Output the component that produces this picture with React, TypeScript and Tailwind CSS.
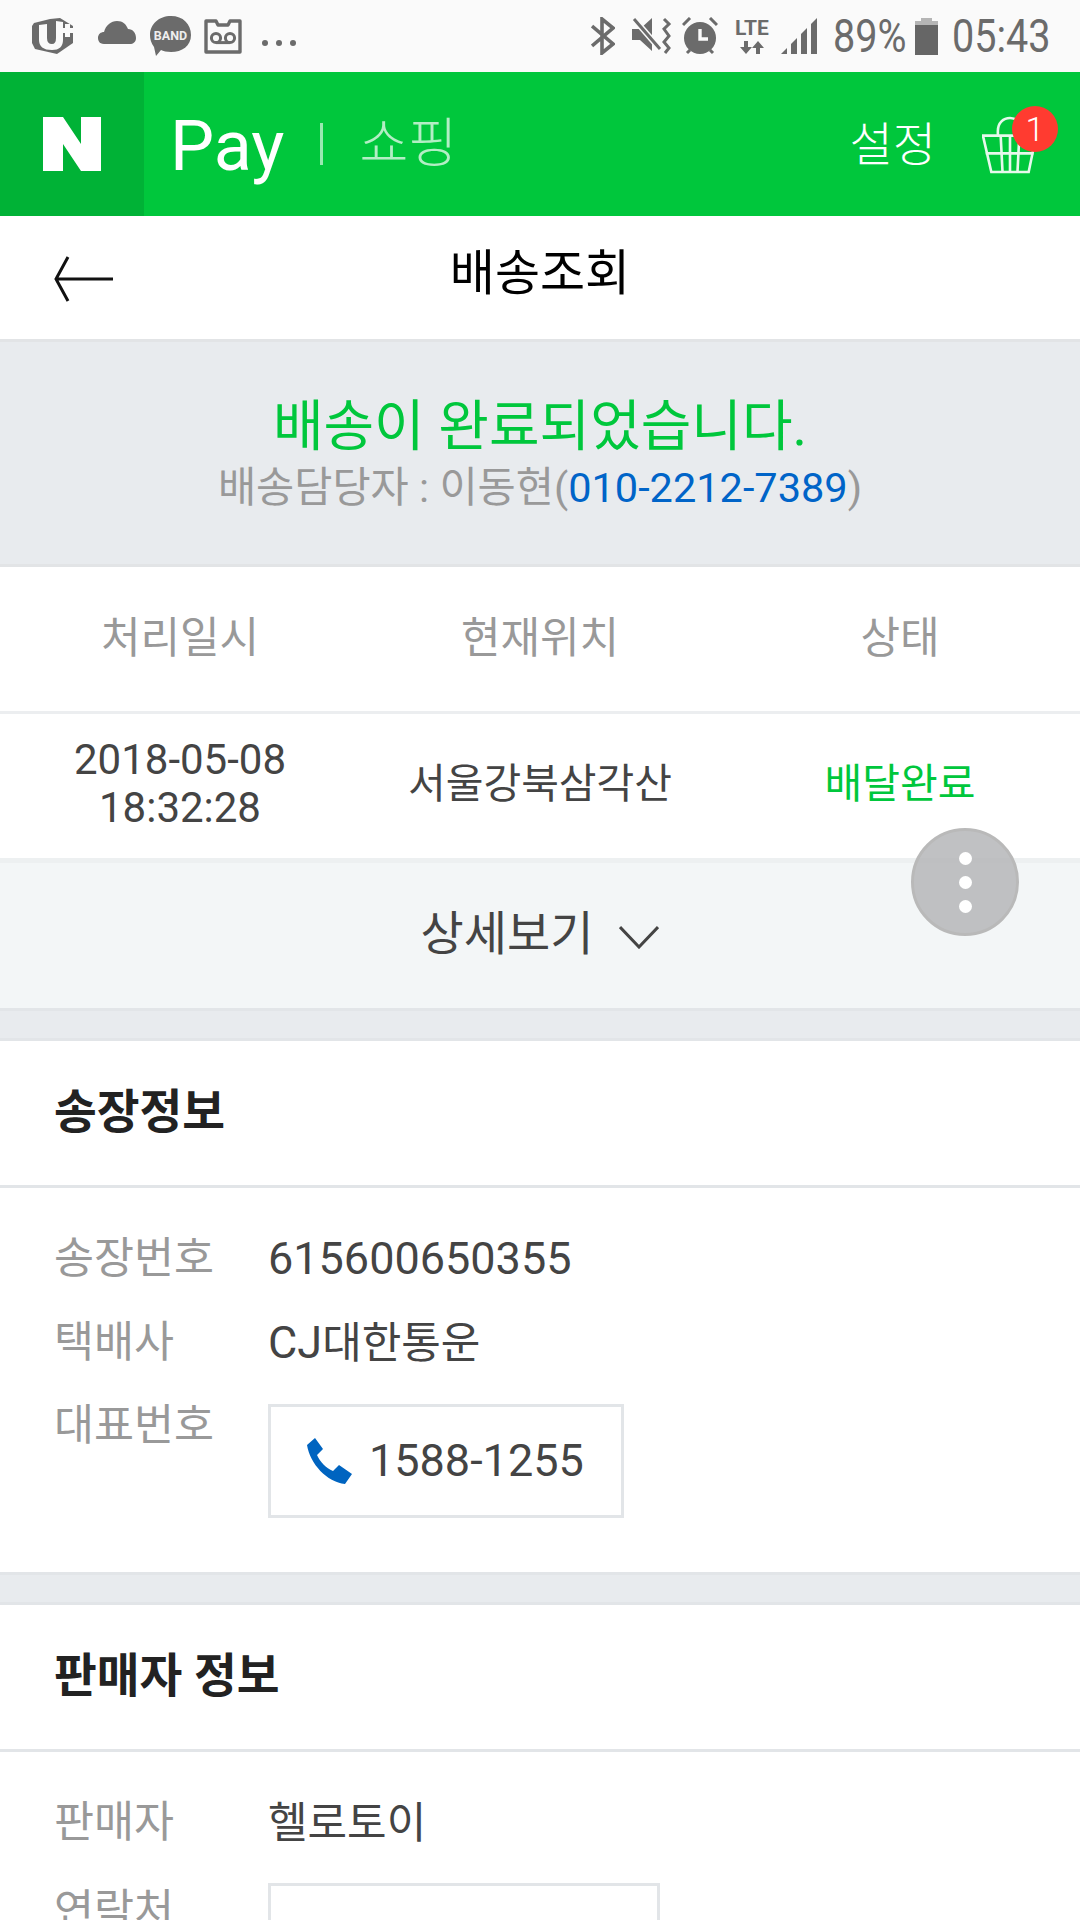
import React from "react";

const KR = "font-['Roboto','Noto_Sans_CJK_KR',sans-serif]";

// Status bar icons, drawn in a 36px box
function StatusLeft() {
  return (
    <div className="flex items-center">
      <svg width="42" height="38" viewBox="0 0 42 38" className="ml-[32px]" fill="#6b6b6b">
        <path d="M2 6 L18 2 L28 1 L41 9 L41 26 L25 37 L3 32 L0 26 L0 9 Z" />
        <path d="M7 8 L15 7 L15 21 Q15 27 20 27 Q24 27 24 21 L24 4 L31 5 L31 23 Q31 33 20 33 Q7 33 7 23 Z" fill="#fafafa" />
        <path d="M29 11 H33 V7 H38 V11 H42 V16 H38 V20 H33 V16 H29 Z" fill="#fafafa" />
      </svg>
      <svg width="38" height="24" viewBox="0 0 38 24" className="ml-[24px] mt-[-6px]" fill="#6b6b6b">
        <path d="M6 23 C1 23 0 19 0 17 C0 13 3 11 6 11 C8 4 13 0 19 0 C25 0 28 3 30 8 C35 8 38 12 38 17 C38 21 35 23 32 23 Z" />
      </svg>
      <svg width="42" height="42" viewBox="0 0 42 42" className="ml-[14px]">
        <path d="M21 1 C33 1 41 9 41 20 C41 31 32 37 21 37 C17 37 13 36 11 35 L6 41 L4 32 C1 28 0 24 0 20 C0 9 9 1 21 1 Z" fill="#6b6b6b" />
        <text x="20.5" y="24.5" textAnchor="middle" fontSize="12.5" fontWeight="700" fill="#eeeeee" fontFamily="Roboto, sans-serif">BAND</text>
      </svg>
      <svg width="38" height="35" viewBox="0 0 38 35" className="ml-[12px]" fill="none">
        <path d="M2 2 H12 L14 6 H24 L26 2 H36 V33 H2 Z" stroke="#6b6b6b" strokeWidth="3.4" strokeLinejoin="round" />
        <circle cx="12" cy="19" r="4.6" stroke="#6b6b6b" strokeWidth="3" />
        <circle cx="26" cy="19" r="4.6" stroke="#6b6b6b" strokeWidth="3" />
        <path d="M12 23.6 H26" stroke="#6b6b6b" strokeWidth="3" />
      </svg>
      <div className="ml-[20px] mt-[14px] flex gap-[8px]">
        <span className="size-[6px] rounded-full bg-[#6b6b6b]" />
        <span className="size-[6px] rounded-full bg-[#6b6b6b]" />
        <span className="size-[6px] rounded-full bg-[#6b6b6b]" />
      </div>
    </div>
  );
}

function StatusRight() {
  return (
    <div className="flex items-center pr-[31px]">
      <svg width="24" height="38" viewBox="0 0 24 38" fill="none" stroke="#6b6b6b" strokeWidth="3.6">
        <path d="M1 9 L22 27 L11 36 V2 L22 11 L1 29" />
      </svg>
      <svg width="40" height="38" viewBox="0 0 40 38" className="ml-[17px]" fill="#6b6b6b">
        <path d="M0 12 H8 L20 1 V34 L8 23 H0 Z" />
        <path d="M2 2 L28 32" stroke="#fafafa" strokeWidth="6" />
        <path d="M2 2 L28 32" stroke="#6b6b6b" strokeWidth="3" />
        <path d="M32 2 L37 7 L32 12 L37 19 L32 25 L37 31 L33 36" fill="none" stroke="#6b6b6b" strokeWidth="3" />
      </svg>
      <svg width="36" height="38" viewBox="0 0 36 38" className="ml-[10px]" fill="#6b6b6b">
        <circle cx="18" cy="21" r="16" />
        <path d="M1 8 L8 1 M35 8 L28 1 M5 36 L8 33 M31 36 L28 33" stroke="#6b6b6b" strokeWidth="3" />
        <path d="M18 12 V22 H26" fill="none" stroke="#fafafa" strokeWidth="3.4" />
      </svg>
      <div className="ml-[15px] flex w-[38px] flex-col items-center">
        <span className="font-['Roboto',sans-serif] text-[21px] font-bold leading-[20px] text-[#6b6b6b]">LTE</span>
        <svg width="24" height="14" viewBox="0 0 24 14" fill="#6b6b6b" className="mt-[3px]">
          <path d="M4 0 H8 V6 H12 L6 13 L0 6 H4 Z" />
          <path d="M16 13 H20 V7 H24 L18 0 L12 7 H16 Z" />
        </svg>
      </div>
      <svg width="36" height="38" viewBox="0 0 36 38" className="ml-[10px]" fill="#6b6b6b">
        <path d="M0 37 L6 31 V37 Z" />
        <path d="M10 37 V27 L16 21 V37 Z" />
        <path d="M20 37 V17 L26 11 V37 Z" />
        <path d="M30 37 V7 L36 1 V37 Z" />
      </svg>
      <span className="ml-[16px] w-[72px] origin-left scale-x-[0.86] whitespace-nowrap font-['Roboto',sans-serif] text-[46px] leading-[44px] text-[#6b6b6b]">89%</span>
      <div className="ml-[10px] flex w-[23px] flex-col items-center">
        <div className="h-[3px] w-[11px] bg-[#b5b5b5]" />
        <div className="h-[4px] w-[23px] bg-[#b5b5b5]" />
        <div className="h-[30px] w-[23px] bg-[#666666]" />
      </div>
      <span className="ml-[14px] w-[97px] origin-left scale-x-[0.86] whitespace-nowrap font-['Roboto',sans-serif] text-[46px] leading-[44px] text-[#6b6b6b]">05:43</span>
    </div>
  );
}

function Basket() {
  return (
    <svg width="56" height="58" viewBox="0 0 60 62" fill="none" stroke="#e6f9ec" strokeWidth="2.8">
      <path d="M1 21 H58 L50 60 H10 Z" />
      <path d="M17 21 V16 C17 7 23 2 30 2 C37 2 43 7 43 16 V21" />
      <path d="M20 21 L22 60 M30 21 V60 M40 21 L38 60 M4 40 H55" />
    </svg>
  );
}

function InfoRow({ label, children, className = "" }: { label: string; children: React.ReactNode; className?: string }) {
  return (
    <div className={`flex items-center ${className}`}>
      <span className="w-[268px] pl-[54px] text-[43.5px] leading-[56px] text-[#999999]">{label}</span>
      <div className="flex h-[56px] items-baseline leading-[56px] text-[#444444]">{children}</div>
    </div>
  );
}

function SectionTitle({ children }: { children: React.ReactNode }) {
  return (
    <div className="flex h-[150px] items-center border-y-[3px] border-y-[#e2e5e8] bg-white pl-[54px] text-[46.5px] font-bold text-[#222222]">
      {children}
    </div>
  );
}

export default function App() {
  return (
    <div className={`relative h-[1920px] w-[1080px] overflow-hidden bg-white ${KR}`}>
      {/* Android status bar */}
      <div className="flex h-[72px] items-center justify-between bg-[#fafafa]">
        <StatusLeft />
        <StatusRight />
      </div>

      {/* Green app header */}
      <div className="flex h-[144px] items-center bg-[#00c73c]">
        <div className="flex h-full w-[144px] items-center justify-center bg-[#00b236]">
          <svg width="58" height="54" viewBox="0 0 58 54" fill="#ffffff">
            <path d="M0 0 H20 L38 27 V0 H58 V54 H38 L20 27 V54 H0 Z" />
          </svg>
        </div>
        <span className="ml-[26px] mt-[4px] font-['Roboto',sans-serif] text-[70px] font-normal leading-none text-white">Pay</span>
        <div className="ml-[36px] h-[42px] w-[3px] bg-white/60" />
        <span className="ml-[36px] text-[53px] font-light leading-none text-white/70">쇼핑</span>
        <span className="ml-auto text-[47px] font-light leading-none text-white">설정</span>
        <div className="relative ml-[46px] mr-[42px] mt-[2px] flex">
          <Basket />
          <span className="absolute right-[-20px] top-[-10px] flex size-[46px] items-center justify-center rounded-full bg-[#ff3b30] font-['Roboto',sans-serif] text-[34px] font-light text-white">
            1
          </span>
        </div>
      </div>

      {/* Title bar */}
      <div className="relative flex h-[123px] items-center justify-center">
        <svg width="62" height="48" viewBox="0 0 62 48" fill="none" stroke="#111111" strokeWidth="3" className="absolute left-[53px] top-[39px]">
          <path d="M60 24 H3 M15 2 L3 24 L15 46" />
        </svg>
        <span className="mt-[-8px] text-[49px] leading-none text-black">배송조회</span>
      </div>

      {/* Delivery status banner */}
      <div className="flex h-[228px] flex-col items-center border-y-[3px] border-y-[#e2e4e6] bg-[#e8ebee] pt-[48px]">
        <div className="text-[55px] leading-[72px] text-[#00c73c]">배송이 완료되었습니다.</div>
        <div className="text-[41.5px] leading-[52px] text-[#999999]">
          배송담당자 : 이동현(<span className="text-[#0064c8]">010-2212-7389</span>)
        </div>
      </div>

      {/* Tracking table */}
      <div className="grid h-[144px] grid-cols-3 items-center pb-[2px] text-center text-[43px] text-[#999999]">
        <span>처리일시</span>
        <span>현재위치</span>
        <span>상태</span>
      </div>
      <div className="grid h-[147px] grid-cols-3 items-center border-t-[3px] border-t-[#eceef0] pb-[2px] text-center text-[41px] text-[#444444]">
        <span className="mt-[-3px] text-[42px] leading-[48px]">
          2018-05-08
          <br />
          18:32:28
        </span>
        <span>서울강북삼각산</span>
        <span className="text-[#00c73c]">배달완료</span>
      </div>
      <div className="flex h-[153px] items-center justify-center border-t-[5px] border-b-[3px] border-t-[#edf0f1] border-b-[#e2e5e8] bg-[#f3f6f7] pb-[2px] text-[47px] text-[#444444]">
        <span>상세보기</span>
        <svg width="40" height="24" viewBox="0 0 40 24" fill="none" stroke="#444444" strokeWidth="3" className="ml-[26px] mt-[4px]">
          <path d="M1 2 L20 22 L39 2" />
        </svg>
      </div>

      {/* Invoice info */}
      <div className="h-[27px] bg-[#e8ebee]" />
      <SectionTitle>송장정보</SectionTitle>
      <div className="h-[384px] pt-[43px]">
        <InfoRow label="송장번호">
          <span className="text-[45px]">615600650355</span>
        </InfoRow>
        <InfoRow label="택배사" className="mt-[28px]">
          <span className="text-[45px]">CJ</span>
          <span className="text-[43px]">대한통운</span>
        </InfoRow>
        <div className="mt-[27px] flex">
          <span className="w-[268px] pl-[54px] text-[43.5px] leading-[56px] text-[#999999]">대표번호</span>
          <div className="mt-[6px] flex h-[114px] w-[356px] items-center border-[3px] border-[#e2e5e8] pl-[36px]">
            <svg width="46" height="46" viewBox="0 0 46 46" fill="#0064c0">
              <path d="M8 0 L16 11 L10 17 C13 24 19 30 26 33 L32 27 L45 36 L38 46 C20 44 3 26 0 7 Z" />
            </svg>
            <span className="ml-[16px] text-[45px] text-[#444444]">1588-1255</span>
          </div>
        </div>
      </div>

      {/* Seller info */}
      <div className="h-[30px] border-t-[3px] border-t-[#e2e5e8] bg-[#e8ebee]" />
      <SectionTitle>판매자 정보</SectionTitle>
      <div className="pt-[43px]">
        <InfoRow label="판매자">
          <span className="text-[43px]">헬로토이</span>
        </InfoRow>
        <div className="mt-[32px] flex">
          <span className="w-[268px] pl-[54px] text-[43.5px] leading-[56px] text-[#999999]">연락처</span>
          <div className="h-[114px] w-[392px] border-[3px] border-[#e2e5e8]" />
        </div>
      </div>

      {/* Floating menu button */}
      <div className="absolute left-[911px] top-[828px] flex size-[108px] flex-col items-center justify-center gap-[11px] rounded-full border-[3px] border-[#b9b9b9] bg-[#b5b6b8]/85">
        <span className="h-[13px] w-[13px] rounded-full bg-white" />
        <span className="h-[13px] w-[13px] rounded-full bg-white" />
        <span className="h-[13px] w-[13px] rounded-full bg-white" />
      </div>
    </div>
  );
}
